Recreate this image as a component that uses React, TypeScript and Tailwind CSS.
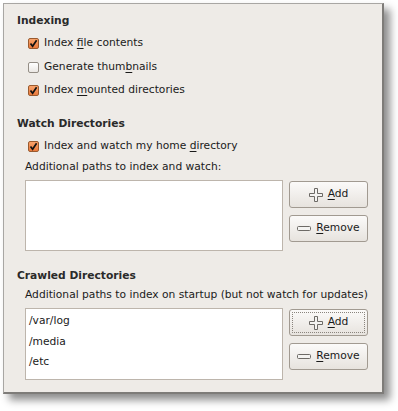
import React from 'react';

const FONT = { fontFamily: '"DejaVu Sans", Verdana, sans-serif' };

const CheckBox = ({ checked }: { checked: boolean }) =>
  checked ? (
    <span className="w-[11px] h-[11px] rounded-[2px] border border-[#9a5a2e] bg-gradient-to-b from-[#f9a36a] to-[#ea7a3c] flex items-center justify-center shrink-0">
      <svg width="9" height="9" viewBox="0 0 9 9">
        <path d="M1.5 4.5 L3.6 7.2 L7.6 1.2" stroke="#111" strokeWidth="1.7" fill="none" />
      </svg>
    </span>
  ) : (
    <span className="w-[11px] h-[11px] rounded-[2px] border border-[#948e86] bg-gradient-to-b from-[#ffffff] to-[#ebe8e4] shrink-0" />
  );

const CheckRow = ({ checked, h, children }: { checked: boolean; h: string; children: React.ReactNode }) => (
  <div className={`flex items-center gap-[5px] pl-[24px] ${h}`}>
    <CheckBox checked={checked} />
    <span>{children}</span>
  </div>
);

const PlusIcon = () => (
  <svg width="14" height="14" viewBox="0 0 14 14">
    <path
      d="M5.5 0.5 H8.5 V5.5 H13.5 V8.5 H8.5 V13.5 H5.5 V8.5 H0.5 V5.5 H5.5 Z"
      fill="#f4f3f1"
      stroke="#6d6a66"
      strokeWidth="1"
    />
  </svg>
);

const MinusIcon = () => (
  <svg width="14" height="6" viewBox="0 0 14 6">
    <rect x="0.5" y="0.5" width="13" height="4" rx="1" fill="#f4f3f1" stroke="#6d6a66" strokeWidth="1" />
  </svg>
);

const Button = ({ icon, label, rest, focused }: { icon: React.ReactNode; label: string; rest: string; focused?: boolean }) => (
  <button className="w-[79px] h-[27px] rounded-[3px] border border-[#a19a91] bg-gradient-to-b from-[#fbfaf9] to-[#e7e3de] p-[2px] flex">
    <span
      className={`flex-1 flex items-center justify-center gap-[5px] rounded-[1px] ${
        focused ? 'border border-dotted border-[#8a847d]' : 'border border-transparent'
      }`}
    >
      {icon}
      <span className="text-[#1a1a1a]">
        <u className="underline-offset-2">{label}</u>
        {rest}
      </span>
    </span>
  </button>
);

const Heading = ({ children }: { children: React.ReactNode }) => (
  <div className="h-[14px] flex items-center pl-[13px] font-bold text-[#2a2a2a]">{children}</div>
);

export default function App() {
  return (
    <div className="w-[398px] h-[411px] bg-white pt-[3px] pl-[3px] text-[10.7px] text-[#1a1a1a]" style={FONT}>
      <div className="w-[381px] h-[391px] bg-[#eeebe7] border-l border-t border-[#a8a6a3] border-r-2 border-b-2 border-r-[#7e7c79] border-b-[#7e7c79] shadow-[6px_6px_8px_rgba(0,0,0,0.45)] pt-[10px] flex flex-col">
        <Heading>Indexing</Heading>
        <div className="mt-[3px]" />
        <CheckRow checked h="h-[24px]">
          Index <u className="underline-offset-2">f</u>ile contents
        </CheckRow>
        <CheckRow checked={false} h="h-[24px]">
          Generate thum<u className="underline-offset-2">b</u>nails
        </CheckRow>
        <CheckRow checked h="h-[23px]">
          Index <u className="underline-offset-2">m</u>ounted directories
        </CheckRow>

        <div className="mt-[15px]" />
        <Heading>Watch Directories</Heading>
        <div className="mt-[3px]" />
        <CheckRow checked h="h-[24px]">
          Index and watch my home <u className="underline-offset-2">d</u>irectory
        </CheckRow>
        <div className="h-[14px] mt-[2px] flex items-center pl-[21px]">Additional paths to index and watch:</div>
        <div className="mt-[6px] flex pl-[21px] gap-[6px]">
          <div className="w-[258px] h-[71px] bg-white border border-[#bdb5ac]" />
          <div className="flex flex-col gap-[7px] pt-[1px]">
            <Button icon={<PlusIcon />} label="A" rest="dd" />
            <Button icon={<MinusIcon />} label="R" rest="emove" />
          </div>
        </div>

        <div className="mt-[18px]" />
        <Heading>Crawled Directories</Heading>
        <div className="h-[14px] mt-[5px] flex items-center pl-[21px]">
          Additional paths to index on startup (but not watch for updates)
        </div>
        <div className="mt-[6px] flex pl-[21px] gap-[6px]">
          <div className="w-[258px] h-[72px] bg-white border border-[#bdb5ac] pt-[2px] pl-[3px] flex flex-col">
            <div className="h-[21px] flex items-center">/var/log</div>
            <div className="h-[20px] flex items-center">/media</div>
            <div className="h-[21px] flex items-center">/etc</div>
          </div>
          <div className="flex flex-col gap-[7px] pt-[1px]">
            <Button icon={<PlusIcon />} label="A" rest="dd" focused />
            <Button icon={<MinusIcon />} label="R" rest="emove" />
          </div>
        </div>
      </div>
    </div>
  );
}
